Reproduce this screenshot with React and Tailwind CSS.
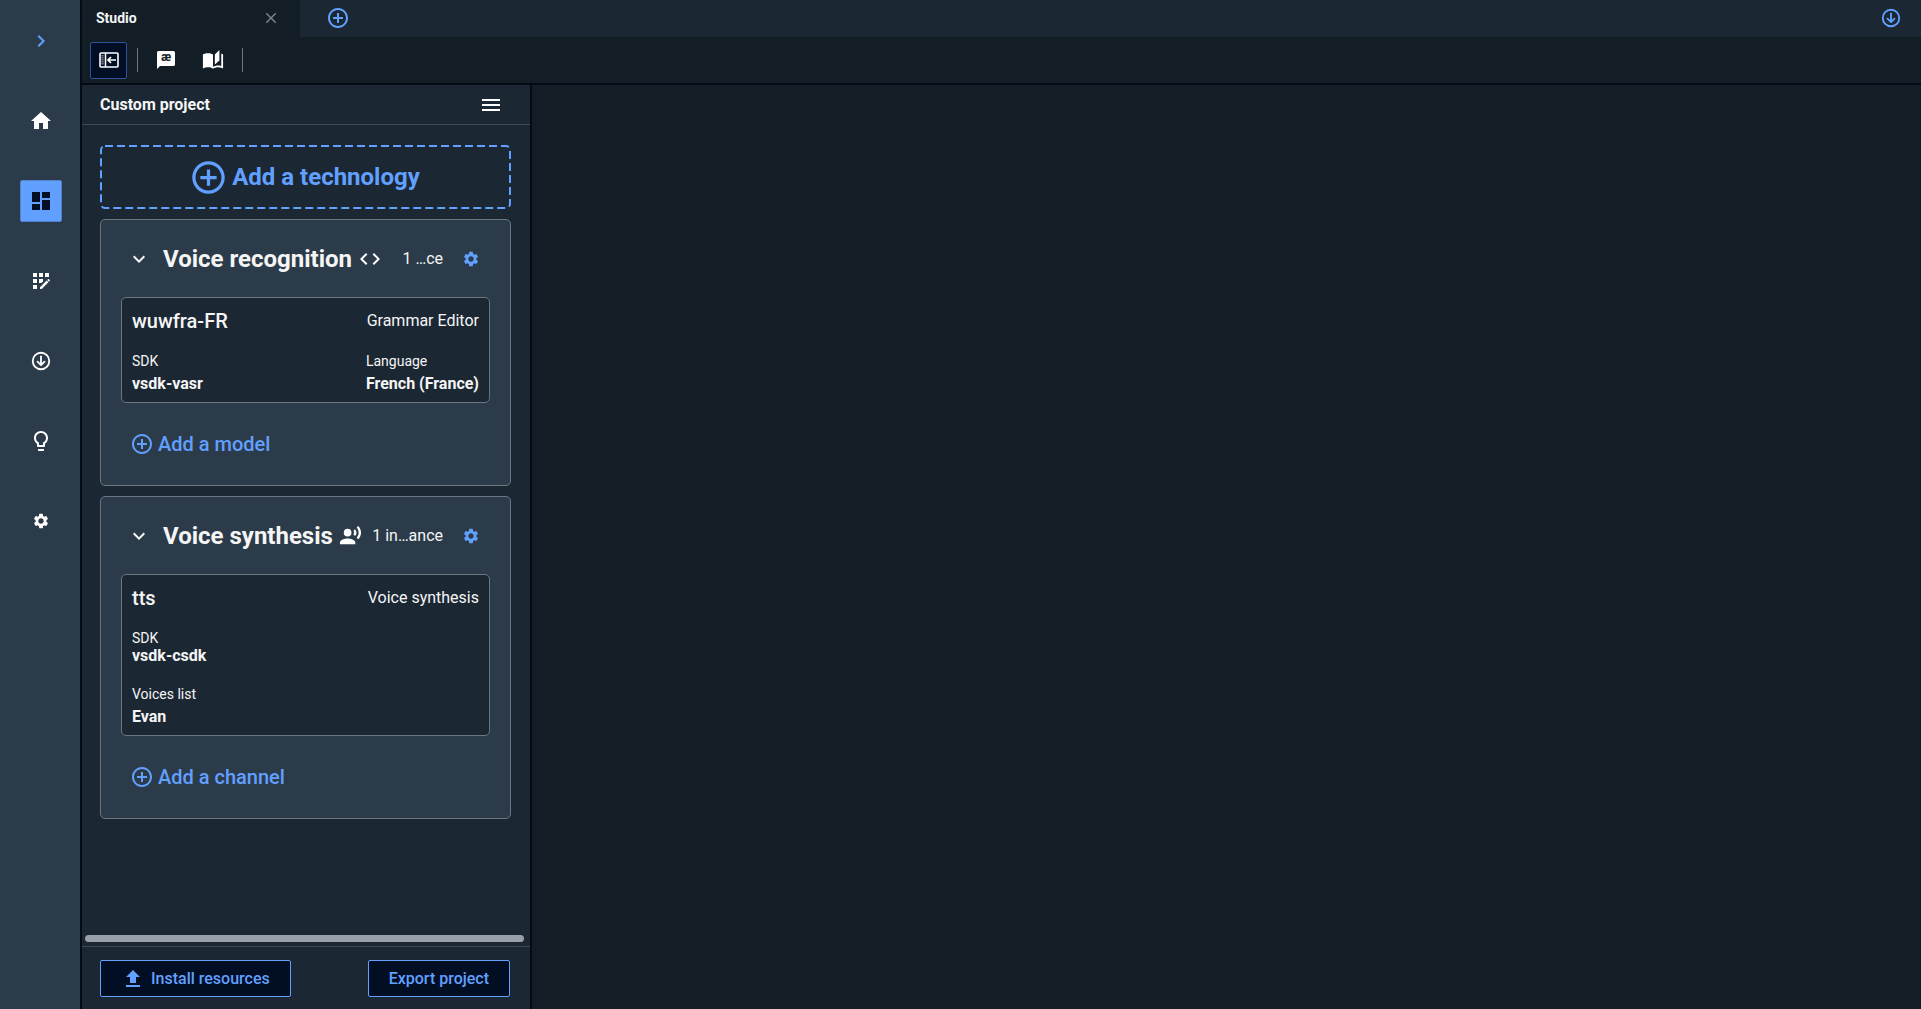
import React from "react";
import {
  MdAddCircleOutline, MdAppRegistration, MdAutoStories, MdChevronRight, MdClose, MdCode,
  MdDashboard, MdExpandMore, MdHome, MdLightbulbOutline, MdMenu, MdRecordVoiceOver,
  MdSettings, MdUpload,
} from "react-icons/md";

function ArrowCircleDown({ className }) {
  return (
    <svg viewBox="0 0 24 24" fill="none" stroke="currentColor" strokeWidth="2" className={className}>
      <circle cx="12" cy="12" r="9" />
      <path d="M12 7v9M8.2 12.7 12 16.5l3.8-3.8" strokeLinecap="round" strokeLinejoin="round" />
    </svg>
  );
}

function PanelCollapse() {
  return (
    <svg viewBox="0 0 20 16" className="h-4 w-5" fill="none" stroke="currentColor">
      <rect x="1" y="1" width="18" height="14" rx="1" strokeWidth="1.6" />
      <path d="M6.5 1v14" strokeWidth="1.5" />
      <path d="M3.5 3v10" strokeWidth="2.4" strokeDasharray="1.5 0.5" opacity="0.45" />
      <path d="M17 8H9.5M12 5 9 8l3 3" strokeWidth="1.7" />
    </svg>
  );
}

function PhoneticBubble() {
  return (
    <svg viewBox="0 0 18 18" className="size-[18px]">
      <path fill="currentColor" d="M1.5 0h15A1.5 1.5 0 0 1 18 1.5v12a1.5 1.5 0 0 1-1.5 1.5H3l-3 3V1.5A1.5 1.5 0 0 1 1.5 0z" />
      <text x="9" y="10" textAnchor="middle" fontSize="12" fontWeight="700" fill="#131d25" fontFamily="Roboto, sans-serif">æ</text>
    </svg>
  );
}

function DashedOutline() {
  return (
    <svg className="pointer-events-none absolute inset-0 size-full overflow-visible p-px" fill="none" aria-hidden="true">
      <rect width="100%" height="100%" rx="4" stroke="currentColor" strokeWidth="2" strokeDasharray="8 4" />
    </svg>
  );
}

function NavItem({ label, active, children }) {
  return (
    <button
      type="button"
      aria-label={label}
      className={
        active
          ? "flex size-[42px] items-center justify-center rounded-xs border border-[#4f81cc] bg-[#62a0ff] text-[#020e24]"
          : "flex size-[42px] items-center justify-center text-white"
      }
    >
      {children}
    </button>
  );
}

function Field({ label, value, tight }) {
  return (
    <div>
      <dt className="text-sm leading-4">{label}</dt>
      <dd className={tight ? "text-base leading-5 font-bold" : "mt-[5px] text-base leading-5 font-bold"}>{value}</dd>
    </div>
  );
}

function Technology({ title, icon, count, addLabel, children }) {
  return (
    <section className="mb-2.5 rounded-[5px] border border-[#6b7780] bg-[#2b3b49] px-5">
      <div className="flex h-[77px] items-center pl-1.5 pr-2.5">
        <button type="button" aria-label={"Collapse " + title} className="mr-3 flex size-6 items-center justify-center">
          <MdExpandMore className="size-6" />
        </button>
        <h2 className="text-2xl font-bold whitespace-nowrap">{title}</h2>
        <span className="ml-1.5">{icon}</span>
        <span className="ml-auto text-base">{count}</span>
        <button type="button" aria-label={title + " settings"} className="ml-[19px] text-[#62a0ff]">
          <MdSettings className="size-[18px]" />
        </button>
      </div>
      {children}
      <button type="button" className="flex h-[82px] items-center gap-1 pl-[9px] text-xl font-medium text-[#62a0ff]">
        <MdAddCircleOutline className="size-6" />
        {addLabel}
      </button>
    </section>
  );
}

export default function App() {
  return (
    <div className="flex h-screen bg-[#131d25] font-[Roboto,sans-serif] text-[#f5f5f5]">
      <nav className="flex w-[82px] shrink-0 flex-col items-center gap-[38px] border-r-2 border-[#030c16] bg-[#2b3b49] pt-5 pl-0.5">
        <button type="button" aria-label="Expand menu" className="flex size-[42px] items-center justify-center text-[#62a0ff]">
          <MdChevronRight className="size-6" />
        </button>
        <NavItem label="Home"><MdHome className="size-6" /></NavItem>
        <NavItem label="Studio" active><MdDashboard className="size-6" /></NavItem>
        <NavItem label="Applications"><MdAppRegistration className="size-6" /></NavItem>
        <NavItem label="Downloads"><ArrowCircleDown className="size-[22px]" /></NavItem>
        <NavItem label="Tips"><MdLightbulbOutline className="size-6" /></NavItem>
        <NavItem label="Settings"><MdSettings className="size-[18px]" /></NavItem>
      </nav>

      <div className="flex min-w-0 flex-1 flex-col">
        <div className="flex h-[37px] bg-[#1b2733]">
          <div className="flex w-[218px] items-center justify-between bg-[#131d25] pr-5 pb-0.5 pl-3.5">
            <span className="text-sm font-bold">Studio</span>
            <button type="button" aria-label="Close tab" className="text-[#78828a]">
              <MdClose className="size-[18px]" />
            </button>
          </div>
          <div className="flex flex-1 items-center justify-between pr-[19px] pb-0.5 pl-[26px] text-[#62a0ff]">
            <button type="button" aria-label="New tab">
              <MdAddCircleOutline className="size-6" />
            </button>
            <button type="button" aria-label="Downloads">
              <ArrowCircleDown className="size-[22px]" />
            </button>
          </div>
        </div>

        <div className="flex h-12 items-center border-b-2 border-[#030c16] pl-2">
          <button type="button" aria-label="Hide panel" className="flex size-[37px] items-center justify-center rounded-xs border border-[#2d5399] bg-[#020e24] text-white">
            <PanelCollapse />
          </button>
          <div className="ml-2.5 h-6 w-px bg-[#6b7780]" />
          <button type="button" aria-label="Phonetics" className="ml-[19px] text-white"><PhoneticBubble /></button>
          <button type="button" aria-label="Dictionary" className="ml-[27px] text-white"><MdAutoStories className="size-[22px]" /></button>
          <div className="ml-[18px] h-6 w-px bg-[#6b7780]" />
        </div>

        <div className="flex min-h-0 flex-1">
          <aside className="flex w-[450px] shrink-0 flex-col border-r-2 border-[#030c16] bg-[#1b2733]">
            <header className="flex h-10 items-center justify-between border-b border-[#3d4953] pr-[27px] pl-[18px]">
              <h1 className="text-base font-bold">Custom project</h1>
              <button type="button" aria-label="Project menu" className="text-white"><MdMenu className="size-6" /></button>
            </header>

            <div className="min-h-0 flex-1 overflow-hidden pt-5 pr-[19px] pl-[18px]">
              <button type="button" className="relative mb-2.5 flex h-16 w-full items-center justify-center gap-1 pr-0.5 text-2xl font-bold text-[#62a0ff]">
                <DashedOutline />
                <MdAddCircleOutline className="size-[39px]" />
                Add a technology
              </button>

              <Technology title="Voice recognition" icon={<MdCode className="size-6 text-white" />} count="1 …ce" addLabel="Add a model">
                <article className="rounded-[5px] border border-[#6b7780] bg-[#1b2733] px-2.5 pb-2">
                  <div className="flex h-[46px] items-center justify-between">
                    <h3 className="text-xl font-medium">wuwfra-FR</h3>
                    <span className="text-base">Grammar Editor</span>
                  </div>
                  <dl className="mt-[9px] flex justify-between">
                    <Field label="SDK" value="vsdk-vasr" />
                    <Field label="Language" value="French (France)" />
                  </dl>
                </article>
              </Technology>

              <Technology title="Voice synthesis" icon={<MdRecordVoiceOver className="size-[23px] text-white" />} count="1 in…ance" addLabel="Add a channel">
                <article className="rounded-[5px] border border-[#6b7780] bg-[#1b2733] px-2.5 pb-2">
                  <div className="flex h-[46px] items-center justify-between">
                    <h3 className="text-xl font-medium">tts</h3>
                    <span className="text-base">Voice synthesis</span>
                  </div>
                  <dl className="mt-[9px] flex flex-col gap-5">
                    <Field label="SDK" value="vsdk-csdk" tight />
                    <Field label="Voices list" value="Evan" />
                  </dl>
                </article>
              </Technology>
            </div>

            <div className="mr-[6px] mb-1 ml-[3px] h-[7px] rounded-full bg-[#98a1a9]" />
            <footer className="flex justify-between border-t border-[#3d4953] pt-[13px] pr-5 pb-3 pl-[18px] text-base font-medium text-[#62a0ff]">
              <button type="button" className="flex h-[37px] items-center gap-1.5 rounded-xs border border-[#62a0ff] bg-[#020e24] px-5">
                <MdUpload className="size-6" />
                Install resources
              </button>
              <button type="button" className="flex h-[37px] items-center rounded-xs border border-[#62a0ff] bg-[#020e24] px-5">
                Export project
              </button>
            </footer>
          </aside>
          <main className="flex-1" />
        </div>
      </div>
    </div>
  );
}
